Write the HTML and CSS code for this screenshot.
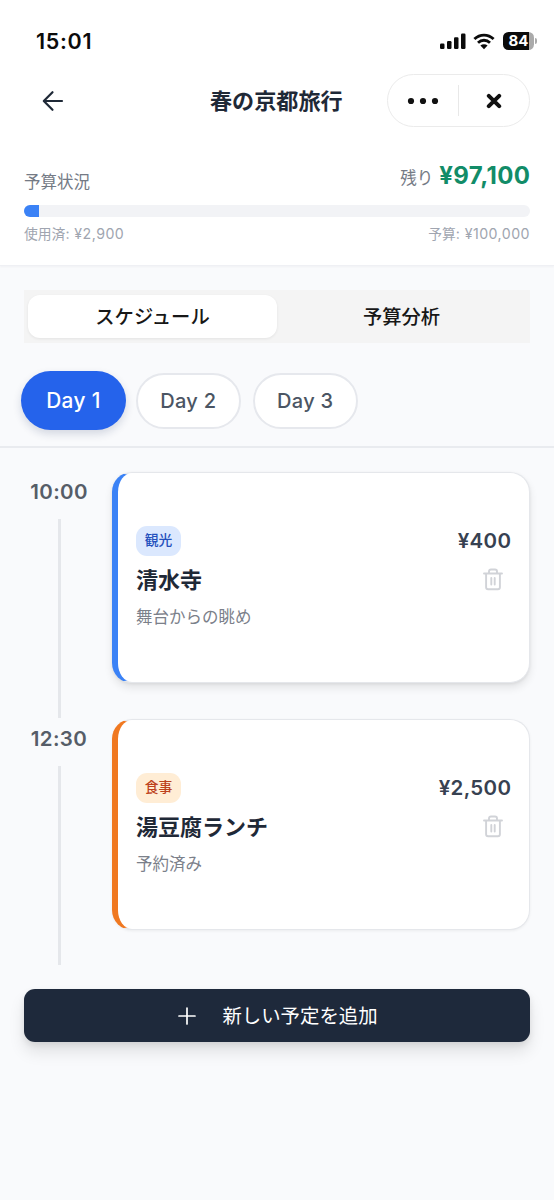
FILE: index.html
```html
<!DOCTYPE html>
<html lang="ja">
<head>
<meta charset="utf-8">
<meta name="viewport" content="width=device-width, initial-scale=1">
<title>春の京都旅行</title>
<link rel="stylesheet" href="styles.css">
</head>
<body>
<header class="header">
  <div class="status">
    <span class="clock">15:01</span>
    <div class="indicators">
      <svg class="signal" width="26" height="17" viewBox="0 0 26 17"><rect x="0" y="10.5" width="4.5" height="5.5" rx="1.2"/><rect x="7" y="8" width="4.5" height="8" rx="1.2"/><rect x="14" y="4.2" width="4.5" height="11.8" rx="1.2"/><rect x="21" y="0.5" width="4.5" height="15.5" rx="1.2"/></svg>
      <svg class="wifi" width="22" height="17" viewBox="0 0 22 17"><path d="M1.4 6C7 .8 15 .8 20.600 6M5 9.700c3.500-3.200 8.500-3.200 12 0" fill="none" stroke="#0b0b0b" stroke-width="2.900"/><path d="M7.400 12.600c2.200-1.900 5-1.900 7.200 0L11 16.300z"/></svg>
      <div class="battery"><span class="level">84</span><span class="tip"></span></div>
    </div>
  </div>
  <nav class="nav">
    <svg class="back" width="22" height="22" viewBox="0 0 22 22"><path d="M20 11H2M10.500 2.200 1.800 11l8.700 8.800"/></svg>
    <h1 class="title">春の京都旅行</h1>
    <div class="capsule">
      <svg class="more" width="32" height="8" viewBox="0 0 32 8"><circle cx="4" cy="4" r="3.100"/><circle cx="16" cy="4" r="3.100"/><circle cx="28" cy="4" r="3.100"/></svg>
      <span class="capsule-line"></span>
      <svg class="close" width="16" height="16" viewBox="0 0 16 16"><path d="M2.800 2.800l10.400 10.400M13.200 2.800 2.800 13.200"/></svg>
    </div>
  </nav>
  <section class="budget">
    <div class="budget-top">
      <span class="label">予算状況</span>
      <span class="remain"><span class="label">残り</span><strong class="amount">¥97,100</strong></span>
    </div>
    <div class="bar"><div class="bar-fill"></div></div>
    <div class="budget-foot"><span>使用済<span class="num">: ¥2,900</span></span><span>予算<span class="num">: ¥100,000</span></span></div>
  </section>
</header>
<main>
  <div class="tabs"><div class="tab tab-active">スケジュール</div><div class="tab">予算分析</div></div>
  <div class="days"><div class="day day-active">Day 1</div><div class="day">Day 2</div><div class="day">Day 3</div></div>
  <div class="timeline">
    <div class="entry">
      <div class="rail"><span class="time">10:00</span><span class="line"></span></div>
      <article class="card sight">
        <div class="info"><span class="tag">観光</span><h2 class="name">清水寺</h2><p class="note">舞台からの眺め</p></div>
        <div class="side"><span class="cost">¥400</span>
          <svg class="trash" width="20" height="23" viewBox="0 0 20 23"><path d="M1 5.500h18M6 5.200V3.400Q6 1.500 8 1.500h4q2 0 2 1.900v1.800M3.100 6v13.200q0 2 2 2h9.800q2 0 2-2V6M8.300 10v6.600M11.700 10v6.600"/></svg>
        </div>
      </article>
    </div>
    <div class="entry">
      <div class="rail"><span class="time">12:30</span><span class="line"></span></div>
      <article class="card meal">
        <div class="info"><span class="tag">食事</span><h2 class="name">湯豆腐ランチ</h2><p class="note">予約済み</p></div>
        <div class="side"><span class="cost">¥2,500</span>
          <svg class="trash" width="20" height="23" viewBox="0 0 20 23"><path d="M1 5.500h18M6 5.200V3.400Q6 1.500 8 1.500h4q2 0 2 1.900v1.800M3.100 6v13.200q0 2 2 2h9.800q2 0 2-2V6M8.300 10v6.600M11.700 10v6.600"/></svg>
        </div>
      </article>
    </div>
  </div>
  <div class="add"><svg width="18" height="18" viewBox="0 0 18 18"><path d="M9 1v16M1 9h16"/></svg><span>新しい予定を追加</span></div>
</main>
</body>
</html>
```
FILE: styles.css
```css
* { box-sizing: border-box; }
body {
  margin: 0;
  min-height: 1200px;
  background: #f9fafc;
  color: #1f2937;
  font-family: Inter, "Noto Sans CJK JP", sans-serif;
}
h1, h2, p { margin: 0; }
svg { display: block; flex: none; }

.header { height: 266px; background: #fff; border-bottom: 1px solid #eff0f4; box-shadow: 0 1px 2px rgba(20, 30, 60, .04); }
.status { height: 74px; padding: 8px 17px 0 36px; display: flex; align-items: center; justify-content: space-between; }
.clock { font-size: 21.500px; font-weight: 600; letter-spacing: .7px; color: #0b0b0b; }
.indicators { display: flex; align-items: center; fill: #0b0b0b; }
.wifi { margin: 0 8px 0 7px; }
.battery { display: flex; align-items: center; gap: 1px; }
.level {
  width: 31px; height: 18px; border-radius: 5.500px;
  background: linear-gradient(90deg, #0b0b0b 26px, #aaa 26px);
  color: #fff; font-size: 15px; font-weight: 700; line-height: 18px; text-align: center;
}
.tip { width: 2px; height: 6px; border-radius: 0 3px 3px 0; background: #aaa; }

.nav { height: 53px; padding: 0 24px 0 42px; display: grid; grid-template-columns: 168px 1fr 143px; align-items: center; }
.back { fill: none; stroke: #1f2937; stroke-width: 2.200; stroke-linecap: round; stroke-linejoin: round; }
.title { font-size: 22.100px; line-height: 32px; font-weight: 700; white-space: nowrap; }
.capsule { height: 53px; border: 1px solid #ebebeb; border-radius: 27px; display: grid; grid-template-columns: 70px 1px 70px; align-items: center; justify-items: center; background: #fff; }
.more { fill: #111; }
.capsule-line { width: 1px; height: 31px; background: #e8e8e8; }
.close { fill: none; stroke: #111; stroke-width: 4; stroke-linecap: round; }

.budget { padding: 31px 24px 0; }
.budget-top { height: 35px; display: flex; justify-content: space-between; }
.label { font-size: 16.500px; line-height: 24px; color: #747a85; }
.budget-top > .label { padding-top: 12px; }
.remain { display: flex; align-items: baseline; gap: 6px; }
.amount { font-size: 24px; line-height: 35px; font-weight: 700; letter-spacing: .4px; margin-right: -.4px; color: #128c68; }
.bar { height: 12px; margin-top: 12px; border-radius: 6px; background: #f2f3f6; overflow: hidden; }
.bar-fill { width: 2.900%; height: 100%; background: #3b82f6; }
.budget-foot { display: flex; justify-content: space-between; margin-top: 7px; font-size: 13.800px; line-height: 20px; color: #a0a5b0; white-space: nowrap; }
.num { font-size: 14.200px; letter-spacing: .45px; }

.tabs { margin: 24px 24px 0; height: 53px; padding: 5px 4px; display: grid; grid-template-columns: 1fr 1fr; background: #f4f4f4; }
.tab { border-radius: 12px; line-height: 45px; height: 43px; font-size: 19.300px; font-weight: 500; color: #171717; text-align: center; }
.tab-active { background: #fff; box-shadow: 0 1px 3px rgba(0, 0, 0, .07); }

.days { height: 105px; padding: 12px 21px 0; display: flex; align-items: center; border-bottom: 2px solid #e9ebef; gap: 11.500px; }
.day { width: 105.500px; height: 56px; border: 2px solid #e6e8ed; border-radius: 28px; background: #fff; font-size: 20px; line-height: 52px; font-weight: 500; letter-spacing: .3px; text-align: center; color: #4b5563; }
.day-active { width: 105px; height: 59px; margin-right: -2px; border: 0; border-radius: 30px; line-height: 59px; font-size: 20.800px; letter-spacing: .4px; background: #2563eb; color: #fff; box-shadow: 0 4px 8px rgba(20, 40, 90, .16); }

.timeline { padding: 24px 24px 0; }
.entry { height: 247px; display: grid; grid-template-columns: 88px 1fr; align-items: start; }
.rail { height: 246px; padding: 6px 18px 0 0; display: flex; flex-direction: column; align-items: center; }
.time { font-size: 20.500px; line-height: 28px; font-weight: 600; letter-spacing: .35px; color: #565d68; }
.line { width: 3px; flex: 1; margin-top: 13px; background: #e5e7eb; }
.card { height: 211px; padding: 53px 18px 0; display: flex; justify-content: space-between; border: 1.500px solid #e5e7eb; border-left-width: 6px; border-radius: 20px; background: #fff; box-shadow: 0 1px 3px rgba(0, 0, 0, .06); }
.sight { border-left-color: #3b82f6; box-shadow: 0 5px 8px rgba(0, 0, 0, .09), 0 1px 3px rgba(0, 0, 0, .07); }
.meal { border-left-color: #f07820; }
.tag { display: block; width: 45px; height: 30px; border-radius: 11px; font-size: 13.800px; line-height: 29px; font-weight: 500; text-align: center; }
.sight .tag { background: #dbe8fe; color: #2450bd; }
.meal .tag { background: #ffedd5; color: #bd421d; }
.name { margin-top: 7px; font-size: 22px; line-height: 34px; font-weight: 700; }
.note { margin-top: 8px; font-size: 16.500px; line-height: 24px; color: #7b808a; }
.side { display: flex; flex-direction: column; align-items: flex-end; }
.cost { font-size: 20.500px; line-height: 30px; font-weight: 600; letter-spacing: .35px; margin-right: -.35px; color: #374151; }
.trash { margin: 12px 8px 0 0; fill: none; stroke: #d1d3d8; stroke-width: 1.900; stroke-linecap: round; }

.add { height: 53px; margin: 23px 24px 0; display: flex; align-items: center; justify-content: center; gap: 26px; padding-left: 2px; border-radius: 11px; background: #1e293b; color: #fff; font-size: 19.400px; line-height: 30px; box-shadow: 0 10px 16px rgba(0, 0, 0, .1), 0 3px 6px rgba(0, 0, 0, .08); }
.add svg { fill: none; stroke: #fff; stroke-width: 1.700; stroke-linecap: round; }
```
